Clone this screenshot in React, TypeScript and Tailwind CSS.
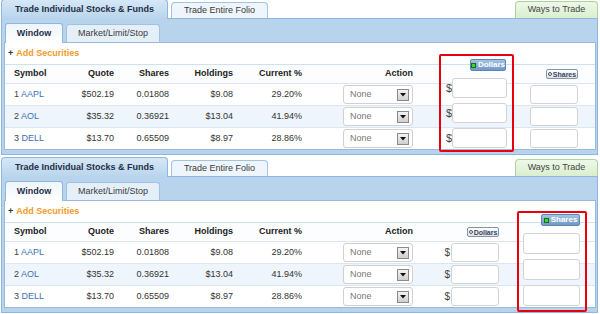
import React from "react";

type Row = { n: number; sym: string; quote: string; shares: string; hold: string; pct: string };

const rows: Row[] = [
  { n: 1, sym: "AAPL", quote: "$502.19", shares: "0.01808", hold: "$9.08", pct: "29.20%" },
  { n: 2, sym: "AOL", quote: "$35.32", shares: "0.36921", hold: "$13.04", pct: "41.94%" },
  { n: 3, sym: "DELL", quote: "$13.70", shares: "0.65509", hold: "$8.97", pct: "28.86%" },
];

const gridCols = "grid grid-cols-[55px_54px_55px_64px_69px_41px_70px_102px_80px]";

function ActiveBtn({ label, w }: { label: string; w: string }) {
  return (
    <div
      className={`flex h-[12px] ${w} items-center justify-center gap-[2px] rounded-[2px] border border-[#5f86b3] bg-gradient-to-b from-[#a5c3e4] to-[#7098c7] text-[8px] font-bold leading-none text-white`}
    >
      <span className="block h-[5px] w-[5px] border border-[#1d6a1d] bg-[#2ae02a]" />
      <span>{label}</span>
    </div>
  );
}

function InactiveBtn({ label }: { label: string }) {
  return (
    <div className="flex h-[10px] w-[32px] items-center justify-center gap-[1px] rounded-[2px] border border-[#8794a5] bg-gradient-to-b from-white to-[#dbe3ec] text-[7px] font-bold leading-none text-[#3a4556]">
      <span className="block h-[4px] w-[4px] rounded-full border border-[#4a5464]" />
      <span>{label}</span>
    </div>
  );
}

function Select() {
  return (
    <div className="flex h-[19px] w-[70px] items-center justify-between rounded-[3px] border border-[#d0d0d0] bg-white pl-[6px] pr-[3px] text-[9px] text-[#777]">
      <span>None</span>
      <div className="flex h-[12px] w-[12px] items-center justify-center border border-[#8a8a8a] bg-gradient-to-b from-[#f4f4f4] to-[#cfcfcf]">
        <svg width="6" height="4" viewBox="0 0 6 4">
          <path d="M0 0 L6 0 L3 3.5 Z" fill="#111" />
        </svg>
      </div>
    </div>
  );
}

function TextBox({ w, h }: { w: string; h: string }) {
  return <div className={`${w} ${h} rounded-[3px] border border-[#d3d3d3] bg-white`} />;
}

function Panel({ active }: { active: "dollars" | "shares" }) {
  const rowBg = ["bg-white", "bg-[#eef5fc]", "bg-white"];
  return (
    <div className="relative h-[155px]">
      {/* top tabs */}
      <div className="ml-[1px] flex h-[19px] w-[597px] items-end border-b border-[#8fb6dc]">
        <div className="relative z-10 -mb-px flex h-[20px] w-[167px] items-center justify-center rounded-t-[4px] border border-b-0 border-[#8fb6dc] bg-gradient-to-b from-[#d6e7f7] to-[#b8d4ec] text-[9px] font-bold text-[#1f2f47]">
          Trade Individual Stocks &amp; Funds
        </div>
        <div className="ml-[3px] flex h-[16px] w-[97px] items-center justify-center rounded-t-[4px] border border-b-0 border-[#a2c3e3] bg-[#eef5fc] text-[9px] text-[#3a3a3a]">
          Trade Entire Folio
        </div>
        <div className="ml-auto flex h-[17px] w-[83px] items-center justify-center rounded-t-[4px] border border-b-0 border-[#add49e] bg-gradient-to-b from-[#eef8e9] to-[#d9efce] text-[9px] text-[#444]">
          Ways to Trade
        </div>
      </div>

      {/* band */}
      <div className="ml-[1px] h-[136px] w-[597px] border-x border-b border-[#8fb6dc] bg-[#b8d4ec] pt-[4px]">
        <div className="flex h-[19px] items-end pl-[3px]">
          <div className="relative z-10 -mb-px flex h-[20px] w-[58px] items-center justify-center rounded-t-[3px] border border-b-0 border-[#8fb6dc] bg-gradient-to-b from-[#eef5fc] to-white text-[9px] font-bold text-[#1f2f47]">
            Window
          </div>
          <div className="ml-[3px] flex h-[18px] w-[94px] items-center justify-center rounded-t-[3px] border border-b-0 border-[#9fc2e3] bg-[#e4eff9] text-[9px] text-[#3a3a3a]">
            Market/Limit/Stop
          </div>
        </div>

        {/* white panel */}
        <div className="ml-[2px] h-[108px] w-[592px] border border-[#98bbdc] bg-white text-[9px]">
          <div className="flex h-[22px] items-center border-b border-[#cfe0f0] pl-[3px] font-bold">
            <span className="text-[#333]">+</span>
            <span className="ml-[3px] text-[#f39a1e]">Add Securities</span>
          </div>

          {/* header */}
          <div className={`${gridCols} h-[18px] items-center bg-[#fbfdff] font-bold text-[#222]`}>
            <div className="pl-[9px]">Symbol</div>
            <div className="text-right">Quote</div>
            <div className="text-right">Shares</div>
            <div className="text-right">Holdings</div>
            <div className="text-right">Current %</div>
            <div />
            <div className="text-right">Action</div>
            <div className="flex justify-end pr-[16px]">
              {active === "shares" && <InactiveBtn label="Dollars" />}
            </div>
            <div className="flex justify-end pr-[17px]">
              {active === "dollars" && <InactiveBtn label="Shares" />}
            </div>
          </div>

          {rows.map((r, i) => (
            <div
              key={r.sym}
              className={`${gridCols} h-[22px] items-center border-t border-[#dae6f2] ${rowBg[i]} text-[#333]`}
            >
              <div className="pl-[9px]">
                <span className="text-[#444]">{r.n} </span>
                <span className="text-[#3c72b4]">{r.sym}</span>
              </div>
              <div className="text-right">{r.quote}</div>
              <div className="text-right">{r.shares}</div>
              <div className="text-right">{r.hold}</div>
              <div className="text-right">{r.pct}</div>
              <div />
              <div>
                <Select />
              </div>
              <div className="flex items-center justify-end pr-[16px]">
                {active === "shares" && (
                  <>
                    <span className="mr-[1px] text-[10px] text-[#444]">$</span>
                    <TextBox w="w-[48px]" h="h-[19px]" />
                  </>
                )}
              </div>
              <div className="flex justify-end pr-[17px]">
                {active === "dollars" && <TextBox w="w-[48px]" h="h-[19px]" />}
              </div>
            </div>
          ))}
        </div>
      </div>

      {/* highlighted (active) column, drawn over the table */}
      {active === "dollars" ? (
        <div className="absolute left-[439px] top-[54px] flex h-[98px] w-[75px] flex-col rounded-[2px] border-2 border-[#e8000e] pt-[3px]">
          <div className="flex justify-end pr-[6px]">
            <ActiveBtn label="Dollars" w="w-[36px]" />
          </div>
          <div className="mt-[7px] flex flex-col gap-[5px] pl-[5px]">
            {[0, 1, 2].map((k) => (
              <div key={k} className="flex items-center">
                <span className="mr-[1px] w-[5px] text-[11px] leading-none text-[#444]">$</span>
                <TextBox w="w-[55px]" h="h-[20px]" />
              </div>
            ))}
          </div>
        </div>
      ) : (
        <div className="absolute left-[517px] top-[53px] flex h-[101px] w-[70px] flex-col rounded-[2px] border-2 border-[#e8000e] pt-[1px]">
          <div className="flex justify-end pr-[5px]">
            <ActiveBtn label="Shares" w="w-[39px]" />
          </div>
          <div className="mt-[7px] flex flex-col gap-[5px] pl-[4px]">
            {[0, 1, 2].map((k) => (
              <TextBox key={k} w="w-[57px]" h="h-[21px]" />
            ))}
          </div>
        </div>
      )}
    </div>
  );
}

export default function App() {
  return (
    <div className="h-[314px] w-[600px] overflow-hidden bg-white font-['Liberation_Sans',Arial,sans-serif]">
      <Panel active="dollars" />
      <div className="mt-[3px]">
        <Panel active="shares" />
      </div>
    </div>
  );
}
